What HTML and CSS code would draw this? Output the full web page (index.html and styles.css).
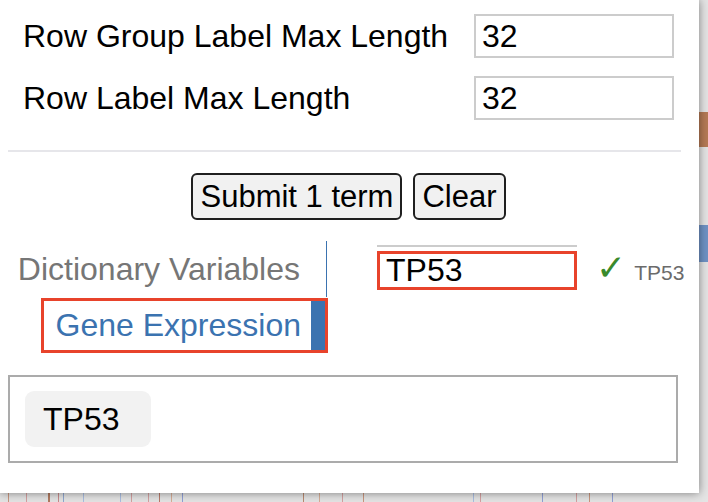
FILE: index.html
```html
<!DOCTYPE html>
<html>
<head>
<meta charset="utf-8">
<link rel="stylesheet" href="styles.css">
</head>
<body>
<div class="backdrop">
  <div class="side-block brown"></div>
  <div class="side-block blue"></div>
</div>
<div class="panel">
  <div class="settings">
    <div class="setting-row">
      <span class="setting-label">Row Group Label Max Length</span>
      <input class="setting-input" type="text" value="32">
    </div>
    <div class="setting-row">
      <span class="setting-label">Row Label Max Length</span>
      <input class="setting-input" type="text" value="32">
    </div>
  </div>
  <div class="divider"></div>
  <div class="actions">
    <button class="btn">Submit 1 term</button>
    <button class="btn">Clear</button>
  </div>
  <div class="search-area">
    <div class="tabs">
      <div class="tab">Dictionary Variables</div>
      <div class="tab active highlight">Gene Expression</div>
    </div>
    <div class="search">
      <div class="search-box">
        <input class="search-input highlight-inset" type="text" value="TP53">
      </div>
      <div class="match"><span class="check">✓</span><span class="match-text">TP53</span></div>
    </div>
  </div>
  <div class="selected">
    <span class="chip">TP53</span>
  </div>
</div>
</body>
</html>
```

FILE: styles.css
```css
html, body {
  margin: 0;
  padding: 0;
}
body {
  width: 708px;
  height: 502px;
  overflow: hidden;
  position: relative;
  font-family: "Liberation Sans", Arial, sans-serif;
  background: #e4e4e4;
}
.backdrop {
  position: absolute;
  inset: 0;
  background:
    linear-gradient(90deg,
      transparent 8px, #c9967e 8px, #c9967e 9px, transparent 9px,
      transparent 26px, #d3a0a0 26px, #d3a0a0 27px, transparent 27px,
      transparent 48px, #b07a60 48px, #b07a60 50px, transparent 50px,
      transparent 58px, #c88a8a 58px, #c88a8a 59px, transparent 59px,
      transparent 63px, #8fa6cf 63px, #8fa6cf 64px, transparent 64px,
      transparent 83px, #a9bde0 83px, #a9bde0 84px, transparent 84px,
      transparent 120px, #a9bde0 120px, #a9bde0 121px, transparent 121px,
      transparent 131px, #d3a0a0 131px, #d3a0a0 132px, transparent 132px,
      transparent 148px, #d3a0a0 148px, #d3a0a0 149px, transparent 149px,
      transparent 159px, #b97a6a 159px, #b97a6a 160px, transparent 160px,
      transparent 171px, #d6ad96 171px, #d6ad96 172px, transparent 172px,
      transparent 182px, #8f9fd6 182px, #8f9fd6 183px, transparent 183px,
      transparent 303px, #b98a70 303px, #b98a70 304px, transparent 304px,
      transparent 319px, #d6ad96 319px, #d6ad96 320px, transparent 320px,
      transparent 342px, #d3a0a0 342px, #d3a0a0 343px, transparent 343px,
      transparent 363px, #c9967e 363px, #c9967e 364px, transparent 364px,
      transparent 473px, #a9bde0 473px, #a9bde0 474px, transparent 474px,
      transparent 480px, #d3a0a0 480px, #d3a0a0 481px, transparent 481px,
      transparent 542px, #8f9fd6 542px, #8f9fd6 543px, transparent 543px,
      transparent 576px, #d3a0a0 576px, #d3a0a0 577px, transparent 577px,
      transparent 589px, #c9967e 589px, #c9967e 590px, transparent 590px,
      transparent 612px, #8f9fd6 612px, #8f9fd6 613px, transparent 613px) ,
    #e4e4e4;
}
.side-block {
  position: absolute;
  left: 699px;
  width: 9px;
}
.side-block.brown {
  top: 112px;
  height: 35px;
  background: #b57a55;
}
.side-block.blue {
  top: 225px;
  height: 37px;
  background: #6f92c4;
}
.panel {
  position: absolute;
  top: 0;
  left: 0;
  width: 699px;
  height: 493px;
  background: #fff;
  box-shadow: 0 0 9px rgba(0, 0, 0, 0.45);
  box-sizing: border-box;
  padding-top: 14px;
}
.settings {
  display: flex;
  flex-direction: column;
  gap: 18px;
  padding-left: 23px;
}
.setting-row {
  display: flex;
  align-items: center;
  height: 44px;
}
.setting-label {
  width: 451px;
  font-size: 32px;
  color: #000;
}
.setting-input {
  width: 200px;
  height: 44px;
  box-sizing: border-box;
  border: 2px solid #cccccc;
  padding: 0 0 0 6px;
  margin: 0;
  font-family: "Liberation Sans", Arial, sans-serif;
  font-size: 32px;
  color: #000;
  outline: none;
}
.divider {
  margin: 30px 18px 0 8px;
  height: 2px;
  background: #e6e6ea;
}
.actions {
  display: flex;
  justify-content: center;
  gap: 11px;
  margin-top: 21px;
  padding-right: 2px;
}
.btn {
  height: 47px;
  box-sizing: border-box;
  border: 2px solid #1f1f1f;
  border-radius: 6px;
  background: #f1f1f1;
  font-family: "Liberation Sans", Arial, sans-serif;
  font-size: 31px;
  color: #000;
  padding: 0 7px;
  margin: 0;
}
.search-area {
  display: flex;
  margin-top: 21px;
}
.tabs {
  display: flex;
  flex-direction: column;
  align-items: flex-end;
  width: 327px;
}
.tab {
  font-size: 32px;
  color: #767676;
  height: 56px;
  line-height: 56px;
  padding-right: 26px;
  border-right: 1px solid #3b73b0;
  white-space: nowrap;
}
.tab.active {
  color: #3b73b0;
  height: 49px;
  line-height: 49px;
  margin-top: 4px;
  padding-left: 12px;
  padding-right: 10px;
  border-right: 14px solid #3b73b0;
  margin-right: 2px;
}
.highlight {
  outline: 3px solid #e8432b;
  outline-offset: 0;
}
.highlight-inset {
  outline: 3px solid #e8432b;
  outline-offset: -3px;
}
.search {
  display: flex;
  align-items: flex-start;
  margin-left: 50px;
  padding-top: 4px;
}
.search-box {
  width: 200px;
  border-top: 2px solid #cccccc;
  padding-top: 4px;
}
.search-input {
  display: block;
  width: 200px;
  height: 39px;
  box-sizing: border-box;
  border: none;
  padding: 0 0 0 9px;
  margin: 0;
  font-family: "Liberation Sans", Arial, sans-serif;
  font-size: 32px;
  color: #000;
}
.match {
  display: flex;
  align-items: baseline;
  margin-left: 19px;
  margin-top: 3px;
}
.check {
  color: #3a8a2c;
  font-size: 36px;
  line-height: 40px;
  font-family: "DejaVu Sans", sans-serif;
}
.match-text {
  color: #6b6b6b;
  font-size: 21px;
  margin-left: 8px;
}
.selected {
  margin: 25px 21px 0 8px;
  height: 88px;
  box-sizing: border-box;
  border: 2px solid #ababab;
  padding: 14px 0 0 15px;
}
.chip {
  display: inline-block;
  background: #f2f2f2;
  border-radius: 9px;
  height: 56px;
  line-height: 56px;
  padding: 0 32px 0 18px;
  font-size: 32px;
  color: #000;
}
```
